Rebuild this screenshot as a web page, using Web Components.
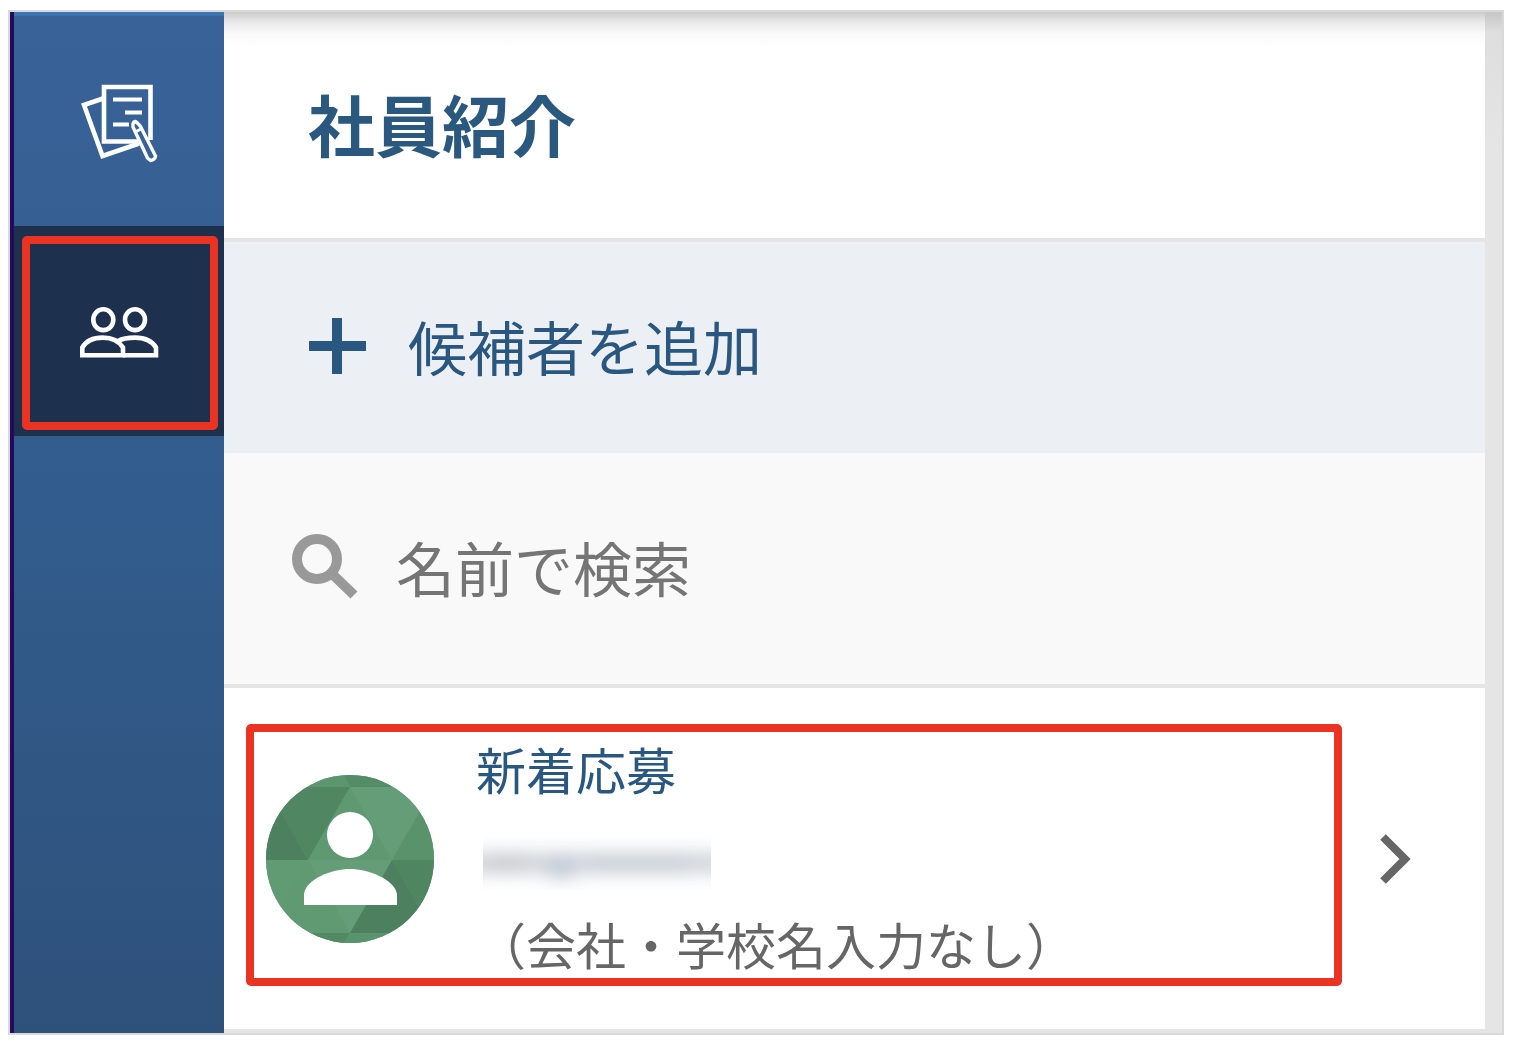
<!DOCTYPE html>
<html lang="ja">
<head>
<meta charset="utf-8">
<meta name="viewport" content="width=device-width, initial-scale=1">
<title>社員紹介</title>
<style>
    body {
        margin: 10px 20px 12px 8px;
        background: #fff;
        font-family: "Noto Sans CJK JP", "Liberation Sans", sans-serif;
    }
</style>
</head>
<body>
<referral-app>
    <side-nav slot="nav">
        <nav-item label="求人">
            <svg width="80" height="80" viewBox="0 0 80 80" fill="none" stroke="#fff" stroke-width="4.6">
                <path d="M23 15.5 L4 22 L22.5 73 L59 60.5"/>
                <path d="M70.5 57 V4 H24 V58.5 H58"/>
                <path d="M33 16.5 H62 M45 29.5 H62 M33 41.5 H49" stroke-width="4"/>
                <path d="M53 44 Q52.500 39 55 38.500 Q57 39 60.500 43.500 L75.500 73 Q75.500 76.500 70.500 77.500 L67.500 75 Z" stroke-width="3.4" stroke-linejoin="round"/>
                <path d="M55 49 L61 46" stroke-width="3"/>
            </svg>
        </nav-item>
        <nav-item label="社員紹介" active>
            <svg width="80" height="52" viewBox="0 0 80 52" fill="none" stroke="#fff" stroke-width="4.6">
                <ellipse cx="23.300" cy="12.700" rx="10" ry="10.400"/>
                <ellipse cx="55" cy="12.700" rx="10" ry="10.400"/>
                <path d="M2.300 48.200 V40.500 Q8 30.600 22.700 30.600 Q37 30.600 43 40.500 V48.200 Z"/>
                <path d="M38 34 Q44 30.600 55 30.600 Q70 30.600 76 40.500 V48.200 H43"/>
            </svg>
        </nav-item>
    </side-nav>
    <page-header>社員紹介</page-header>
    <add-candidate>候補者を追加</add-candidate>
    <name-search placeholder="名前で検索"></name-search>
    <candidate-row>
        新着応募
        <span slot="company">（会社・学校名入力なし）</span>
    </candidate-row>
</referral-app>

<script>
class ReferralApp extends HTMLElement {
    constructor() {
        super();
        this.attachShadow({ mode: "open" });
        this.shadowRoot.innerHTML = `
        <style>
          :host {
            display: flex;
            border: 2px solid #d9d9d9;
            background: #e5e5e5;
          }
          .edge {
            width: 4px;
            background: #230a5c;
          }
          main {
            flex: 1;
            min-width: 0;
          }
          .gutter {
            width: 17px;
            background: linear-gradient(#c6c6c6, #dedede 20px, #e5e5e5 140px);
          }
        </style>
        <div class="edge"></div>
        <slot name="nav"></slot>
        <main><slot></slot></main>
        <div class="gutter"></div>
      `;
    }
}

class SideNav extends HTMLElement {
    constructor() {
        super();
        this.attachShadow({ mode: "open" });
        this.shadowRoot.innerHTML = `
        <style>
          :host {
            display: block;
            width: 210px;
            box-sizing: border-box;
            border-top: 4px solid #3e72b3;
            background: linear-gradient(#396299, #325c8c 50%, #2e517b);
          }
        </style>
        <nav><slot></slot></nav>
      `;
    }
}

class NavItem extends HTMLElement {
    constructor() {
        super();
        this.attachShadow({ mode: "open" });
        this.render();
    }

    render() {
        this.shadowRoot.innerHTML = `
        <style>
          :host {
            display: block;
          }
          :host([active]) {
            background: #1d304e;
          }
          button {
            display: block;
            width: 100%;
            height: 210px;
            padding: 10px 6px 6px 8px;
            border: 0;
            background: none;
            cursor: pointer;
          }
          .frame {
            display: flex;
            align-items: center;
            justify-content: center;
            box-sizing: border-box;
            height: 100%;
            border: 8px solid transparent;
            border-radius: 5px;
          }
          :host([active]) .frame {
            border-color: #ea3323;
          }
        </style>
        <button type="button" aria-label="${this.getAttribute("label")}">
          <span class="frame"><slot></slot></span>
        </button>
      `;
    }
}

class PageHeader extends HTMLElement {
    constructor() {
        super();
        this.attachShadow({ mode: "open" });
        this.shadowRoot.innerHTML = `
        <style>
          :host {
            display: flex;
            align-items: center;
            box-sizing: border-box;
            height: 230px;
            padding: 0 84px 4px;
            border-bottom: 4px solid #e5e5e5;
            background: linear-gradient(#cbcbcb, #e9e9e9 10px, #fafafa 22px, #fff 36px);
          }
          h1 {
            margin: 0;
            color: #2b587f;
            font-size: 67px;
            line-height: 96px;
            font-weight: 700;
          }
        </style>
        <h1><slot></slot></h1>
      `;
    }
}

class AddCandidate extends HTMLElement {
    constructor() {
        super();
        this.attachShadow({ mode: "open" });
        this.shadowRoot.innerHTML = `
        <style>
          :host {
            display: block;
          }
          button {
            display: flex;
            align-items: center;
            gap: 42px;
            width: 100%;
            height: 211px;
            padding: 0 84px 4px;
            border: 0;
            background: #ecf0f4;
            color: #2a577f;
            font: inherit;
            font-size: 59px;
            line-height: 84px;
            text-align: left;
            cursor: pointer;
          }
        </style>
        <button type="button">
          <svg width="58" height="56" viewBox="0 0 58 56" fill="none" stroke="currentColor" stroke-width="10">
            <path d="M1 28 H58 M29 0 V56"/>
          </svg>
          <span><slot></slot></span>
        </button>
      `;
    }
}

class NameSearch extends HTMLElement {
    constructor() {
        super();
        this.attachShadow({ mode: "open" });
        this.shadowRoot.innerHTML = `
        <style>
          :host {
            display: block;
            border-bottom: 4px solid #e5e5e5;
            background: #f9f9f9;
          }
          label {
            display: flex;
            align-items: center;
            gap: 38px;
            box-sizing: border-box;
            height: 231px;
            padding: 0 66px 4px;
          }
          input {
            flex: 1;
            min-width: 0;
            height: 84px;
            padding: 0;
            border: 0;
            outline: 0;
            background: none;
            color: #333;
            font: inherit;
            font-size: 59px;
          }
          input::placeholder {
            color: #757575;
            opacity: 1;
          }
        </style>
        <label>
          <svg width="68" height="68" viewBox="0 0 68 68" fill="none" stroke="#999" stroke-width="10">
            <circle cx="27" cy="26" r="20"/>
            <path d="M40 39 L64 62"/>
          </svg>
          <input type="text" aria-label="${this.getAttribute("placeholder")}" placeholder="${this.getAttribute("placeholder")}">
        </label>
      `;
    }
}

class UserAvatar extends HTMLElement {
    constructor() {
        super();
        this.attachShadow({ mode: "open" });
        this.shadowRoot.innerHTML = `
        <style>
          :host {
            display: block;
            width: 168px;
            height: 168px;
            border-radius: 50%;
            overflow: hidden;
          }
          svg {
            display: block;
          }
        </style>
        <svg width="168" height="168" viewBox="0 0 168 168">
          <rect width="168" height="168" fill="#5f9871"/>
          <path d="M0 0 H78 L84 12 H0 Z" fill="#5b966e"/>
          <path d="M78 0 H168 V12 H84 Z" fill="#548c67"/>
          <path d="M0 12 H84 L42 85 L0 12 Z" fill="#508762"/>
          <path d="M14 36 L42 85 H0 V36 Z" fill="#4d805f"/>
          <path d="M84 12 L126 85 H42 Z" fill="#5f9972"/>
          <path d="M84 12 H168 L126 85 Z" fill="#669d79"/>
          <path d="M168 12 V85 H126 Z" fill="#58936c"/>
          <path d="M42 85 H126 L84 158 Z" fill="#669d79"/>
          <path d="M42 85 L84 158 H0 Z" fill="#609a73"/>
          <path d="M0 85 H42 L0 158 Z" fill="#619b73"/>
          <path d="M126 85 L168 158 H84 Z" fill="#4c805f"/>
          <path d="M126 85 H168 V158 Z" fill="#4f8561"/>
          <path d="M0 158 H84 L78 168 H0 Z" fill="#528964"/>
          <path d="M84 158 H168 V168 H78 Z" fill="#5a946d"/>
          <circle cx="84" cy="60" r="23" fill="#fff"/>
          <path d="M38 130 V119 C40 104 66 94 84 94 C102 94 128 104 131 119 V130 Z" fill="#fff"/>
        </svg>
      `;
    }
}

class CandidateRow extends HTMLElement {
    constructor() {
        super();
        this.attachShadow({ mode: "open" });
        this.shadowRoot.innerHTML = `
        <style>
          :host {
            display: block;
            border-bottom: 4px solid #e5e5e5;
            background: #fff;
          }
          a {
            display: flex;
            align-items: center;
            gap: 38px;
            padding: 36px 74px 43px 22px;
            color: #2a577f;
            text-decoration: none;
          }
          .card {
            display: flex;
            flex: 1;
            align-items: center;
            gap: 42px;
            min-width: 0;
            padding: 4px 12px 0;
            border: 8px solid #ea3323;
            border-radius: 5px;
          }
          user-avatar {
            margin-top: 4px;
          }
          .details {
            display: grid;
            grid-template-rows: 64px 112px 62px;
            align-items: center;
            padding-bottom: 4px;
            font-size: 50px;
            line-height: 62px;
            white-space: nowrap;
          }
          /* name hidden for privacy */
          .name {
            align-self: end;
            width: 228px;
            height: 54px;
            margin: 0 0 22px 7px;
            overflow: hidden;
          }
          .name svg {
            display: block;
          }
          .company {
            color: #666;
          }
          .chevron {
            flex: none;
            margin-top: 8px;
          }
        </style>
        <a href="#">
          <div class="card">
            <user-avatar></user-avatar>
            <div class="details">
              <div><slot></slot></div>
              <div class="name">
                <svg width="228" height="54" viewBox="0 0 228 54" aria-hidden="true">
                  <defs>
                    <filter id="soft" x="-20%" y="-100%" width="140%" height="300%">
                      <feGaussianBlur stdDeviation="9"/>
                    </filter>
                  </defs>
                  <g filter="url(#soft)">
                    <rect x="-20" y="17" width="270" height="20" fill="#cdd1d7"/>
                    <rect x="5" y="20" width="38" height="16" fill="#c4c6cc"/>
                    <rect x="65" y="22" width="26" height="20" fill="#bdc6d4"/>
                    <rect x="105" y="19" width="100" height="17" fill="#c5cad4"/>
                  </g>
                </svg>
              </div>
              <div class="company"><slot name="company"></slot></div>
            </div>
          </div>
          <svg class="chevron" width="31" height="52" viewBox="0 0 31 52" fill="none" stroke="#666" stroke-width="8">
            <path d="M3 4 L25 26 L3 48"/>
          </svg>
        </a>
      `;
    }
}

// Register the web components
customElements.define("referral-app", ReferralApp);
customElements.define("side-nav", SideNav);
customElements.define("nav-item", NavItem);
customElements.define("page-header", PageHeader);
customElements.define("add-candidate", AddCandidate);
customElements.define("name-search", NameSearch);
customElements.define("user-avatar", UserAvatar);
customElements.define("candidate-row", CandidateRow);
</script>
</body>
</html>
